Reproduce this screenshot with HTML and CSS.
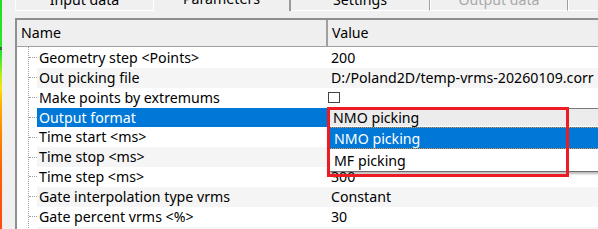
FILE: index.html
```html
<!DOCTYPE html>
<html>
<head>
<meta charset="utf-8">
<title>Parameters</title>
<link rel="stylesheet" href="styles.css">
</head>
<body>
<div class="screen">
  <div class="colorbar"><div class="tick"></div></div>
  <div class="main">
    <div class="tabs">
      <div class="tab t1"><span>Input data</span></div>
      <div class="tab t2 selected"><span>Parameters</span></div>
      <div class="tab t3"><span>Settings</span></div>
      <div class="tab t4 disabled"><span>Output data</span></div>
      <div class="tab t5"><span></span></div>
    </div>
    <div class="panel">
      <div class="grid">
        <div class="head">
          <div class="hname">Name</div>
          <div class="hvalue">Value</div>
        </div>
        <div class="rows">
          <div class="row"><div class="indent"></div><div class="name">Geometry step &lt;Points&gt;</div><div class="value">200</div></div>
          <div class="row alt"><div class="indent"></div><div class="name">Out picking file</div><div class="value">D:/Poland2D/temp-vrms-20260109.corr</div></div>
          <div class="row"><div class="indent"></div><div class="name">Make points by extremums</div><div class="value cb"><div class="check"></div></div></div>
          <div class="row sel"><div class="indent"></div><div class="name">Output format</div>
            <div class="value combo-cell">
              <div class="combo">NMO picking</div>
              <div class="droplist">
                <div class="item active">NMO picking</div>
                <div class="item">MF picking</div>
              </div>
              <div class="annot"></div>
            </div>
          </div>
          <div class="row"><div class="indent"></div><div class="name">Time start &lt;ms&gt;</div><div class="value"></div></div>
          <div class="row alt"><div class="indent"></div><div class="name">Time stop &lt;ms&gt;</div><div class="value"></div></div>
          <div class="row"><div class="indent"></div><div class="name">Time step &lt;ms&gt;</div><div class="value">300</div></div>
          <div class="row alt"><div class="indent"></div><div class="name">Gate interpolation type vrms</div><div class="value">Constant</div></div>
          <div class="row"><div class="indent"></div><div class="name">Gate percent vrms &lt;%&gt;</div><div class="value">30</div></div>
          <div class="row alt"><div class="indent"></div><div class="name"></div><div class="value"></div></div>
        </div>
      </div>
    </div>
  </div>
</div>
</body>
</html>
```
FILE: styles.css
```css
* { box-sizing: border-box; }
html, body { margin: 0; padding: 0; }
body {
  width: 598px;
  height: 229px;
  overflow: hidden;
  background: #f0f0f0;
  font-family: "Noto Sans", "DejaVu Sans", sans-serif;
  font-size: 14.2px;
  color: #000;
}
.screen { display: flex; height: 229px; }

.colorbar {
  width: 2px;
  flex: none;
  display: flex;
  flex-direction: column;
  background: linear-gradient(to bottom, #1fe01f 0px, #2ee62e 55px, #b8ec1a 75px, #f4e60c 88px, #ffb400 102px, #ff8a00 130px, #ff6200 170px, #ff4814 229px);
}
.tick { margin-top: 47px; height: 3px; background: #3d6b3d; }

.main {
  margin-left: 13px;
  width: 640px;
  flex: none;
  display: flex;
  flex-direction: column;
}

/* tabs */
.tabs { display: flex; height: 11px; flex: none; }
.tab {
  height: 11px;
  flex: none;
  display: flex;
  align-items: flex-end;
  justify-content: center;
  line-height: 16px;
  border-left: 1px solid #fff;
  border-right: 1px solid #a0a0a0;
  border-bottom: 1px solid #fff;
  white-space: nowrap;
}
.tab span { margin-bottom: 2px; }
.t1 { width: 138px; border-right: none; }
.t2 { width: 138px; }
.t3 { width: 139px; border-left: none; }
.t4 { width: 138px; }
.t5 { flex: 1; }
.tab.selected { border-bottom: none; border-right: 2px solid #9a9a9a; }
.tab.selected span { margin-bottom: 4px; }
.tab.disabled { color: #a9a9a9; }

/* panel + grid */
.panel { padding-top: 7px; flex: 1; }
.grid {
  border-top: 2px solid #8f8f8f;
  border-left: 2px solid #8f8f8f;
  background: #fff;
}
.head {
  display: flex;
  height: 27px;
  background: #efefef;
  border-bottom: 1px solid #a0a0a0;
}
.hname {
  width: 311px;
  flex: none;
  padding-left: 4px;
  line-height: 26px;
  border-right: 2px solid #a0a0a0;
}
.hvalue { flex: 1; padding-left: 4px; line-height: 26px; }

.rows {
  padding-top: 1px;
  background-color: #fff;
  background-image: linear-gradient(to bottom, #a0a0a0 50%, transparent 50%);
  background-size: 1px 2px;
  background-position: 11px 0;
  background-repeat: repeat-y;
}
.row {
  display: flex;
  height: 19.85px;
  line-height: 19.85px;
  white-space: nowrap;
}
.indent {
  width: 20px;
  flex: none;
  display: flex;
  align-items: center;
  padding-left: 12px;
}
.indent::after {
  content: "";
  width: 8px;
  height: 0;
  border-top: 1px dotted #a0a0a0;
}
.name { width: 290px; flex: none; padding-left: 2px; overflow: hidden; }
.value { flex: 1; padding-left: 4px; }
.row.alt .name, .row.alt .value { background: #f5f5f5; }
.row.sel .name { background: #0078d7; color: #fff; }

.value.cb { padding-left: 1px; padding-top: 4px; }
.check { width: 12px; height: 11px; border: 1px solid #444; background: #fff; }

/* combobox + dropdown */
.value.combo-cell { padding-left: 1px; position: relative; }
.combo {
  height: 100%;
  background: #ececec;
  border-top: 1px solid #7a7a7a;
  border-bottom: 1px solid #fff;
  padding-left: 5px;
  line-height: 17.85px;
}
.droplist {
  position: absolute;
  top: 100%;
  left: 1px;
  width: 300px;
  background: #fff;
  border-bottom: 1px solid #6e6e6e;
  box-shadow: 0 2px 2px rgba(0, 0, 0, 0.28);
  z-index: 2;
}
.item { height: 22px; padding: 2px 0 0 6px; line-height: 20px; }
.item.active {
  background: #0078d7;
  color: #fff;
  border: 1px dotted #e3913b;
  padding: 1px 0 0 5px;
  line-height: 19px;
}
.annot {
  position: absolute;
  left: 0;
  top: -1px;
  width: 242px;
  height: 70px;
  border: 3px solid #ed1c24;
  z-index: 3;
}
```
